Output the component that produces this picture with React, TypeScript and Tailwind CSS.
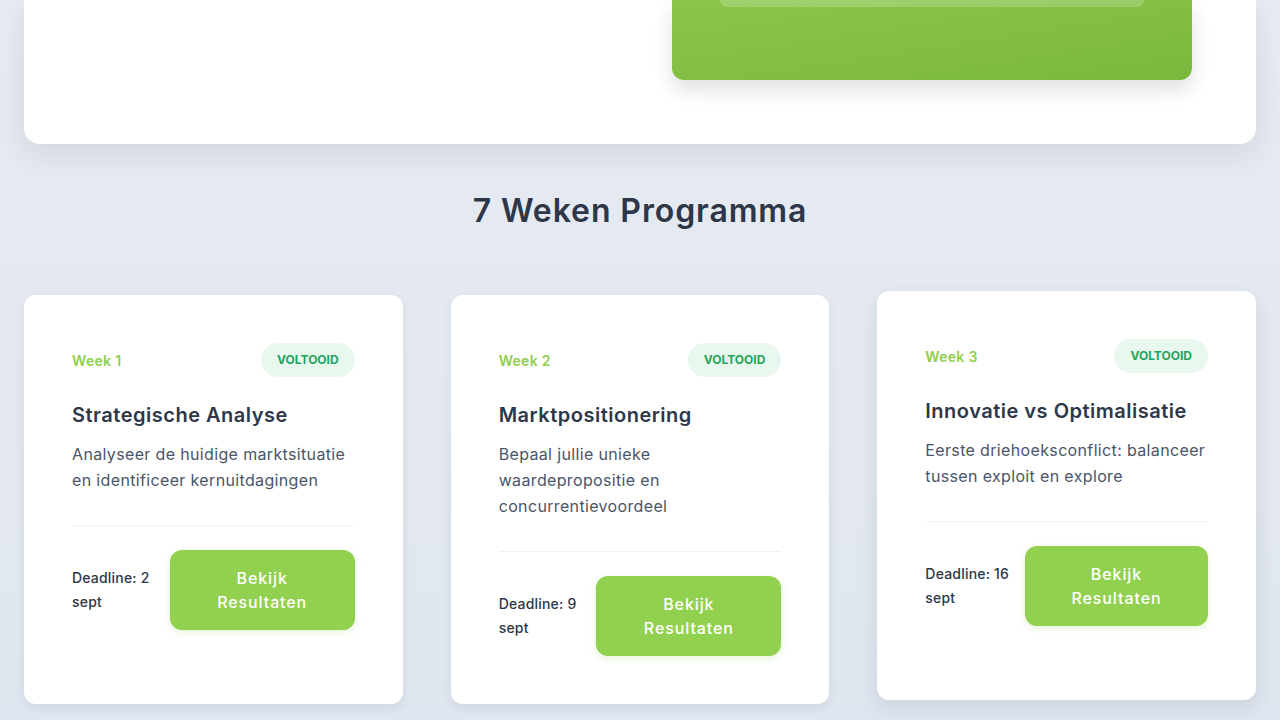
import React from "react";

const weeks = [
  {
    week: "Week 1",
    title: "Strategische Analyse",
    desc: "Analyseer de huidige marktsituatie en identificeer kernuitdagingen",
    deadline: "Deadline: 2 sept",
    raised: false,
  },
  {
    week: "Week 2",
    title: "Marktpositionering",
    desc: "Bepaal jullie unieke waardepropositie en concurrentievoordeel",
    deadline: "Deadline: 9 sept",
    raised: false,
  },
  {
    week: "Week 3",
    title: "Innovatie vs Optimalisatie",
    desc: "Eerste driehoeksconflict: balanceer tussen exploit en explore",
    deadline: "Deadline: 16 sept",
    raised: true,
  },
];

function WeekCard({ w }: { w: (typeof weeks)[number] }) {
  return (
    <div
      className={
        "flex flex-col rounded-xl bg-white p-12 " +
        (w.raised
          ? "-translate-y-1 shadow-[0_8px_20px_rgba(30,41,59,0.10)]"
          : "shadow-[0_4px_10px_rgba(30,41,59,0.08)]")
      }
    >
      <div className="flex items-center justify-between">
        <span className="text-[14px] font-semibold tracking-[0.3px] text-[#8fce4e]">{w.week}</span>
        <span className="rounded-full bg-[#e8f8ee] px-4 py-[9px] text-[12px] font-bold uppercase leading-4 text-[#27a35c]">
          Voltooid
        </span>
      </div>
      <h3 className="mt-6 text-[20px] font-semibold leading-7 tracking-[0.5px] text-[#2d3748]">{w.title}</h3>
      <p className="mt-3 text-[16px] leading-[26px] tracking-[0.35px] text-[#4a5568]">{w.desc}</p>
      <div className="mt-8 flex items-center justify-between gap-3 border-t border-[#edf2f7] pt-6">
        <span className="flex-1 text-[14px] font-medium leading-6 tracking-[0.2px] text-[#2d3748]">{w.deadline}</span>
        <button
          className={
            "shrink-0 rounded-xl bg-[#92d050] px-8 py-4 text-[16px] font-medium leading-6 tracking-[0.9px] text-white shadow-[0_2px_6px_rgba(146,208,80,0.25)] " +
            (w.raised ? "w-[183px]" : "w-[185px]")
          }
        >
          Bekijk Resultaten
        </button>
      </div>
    </div>
  );
}

export default function App() {
  return (
    <div
      className="min-h-[720px] w-full bg-gradient-to-b from-[#e7ebf2] to-[#e0e6ef] px-6"
      style={{ fontFamily: "Inter, 'Noto Sans', sans-serif" }}
    >
      <div className="rounded-b-2xl bg-white pb-16 pr-16 shadow-[0_10px_30px_rgba(30,41,59,0.10)]">
        <div className="ml-auto w-[520px] rounded-b-xl bg-gradient-to-br from-[#8bc64a] to-[#7ab83d] px-12 pb-[73px] shadow-[0_10px_20px_rgba(0,0,0,0.12)]">
          <div className="h-[7px] rounded-b-lg bg-white/20" />
        </div>
      </div>
      <h2 className="mt-[43px] text-center text-[32px] font-semibold leading-[48px] tracking-[0.9px] text-[#2d3748]">
        7 Weken Programma
      </h2>
      <div className="mt-[60px] grid grid-cols-3 gap-12">
        {weeks.map((w) => (
          <WeekCard key={w.week} w={w} />
        ))}
      </div>
    </div>
  );
}
